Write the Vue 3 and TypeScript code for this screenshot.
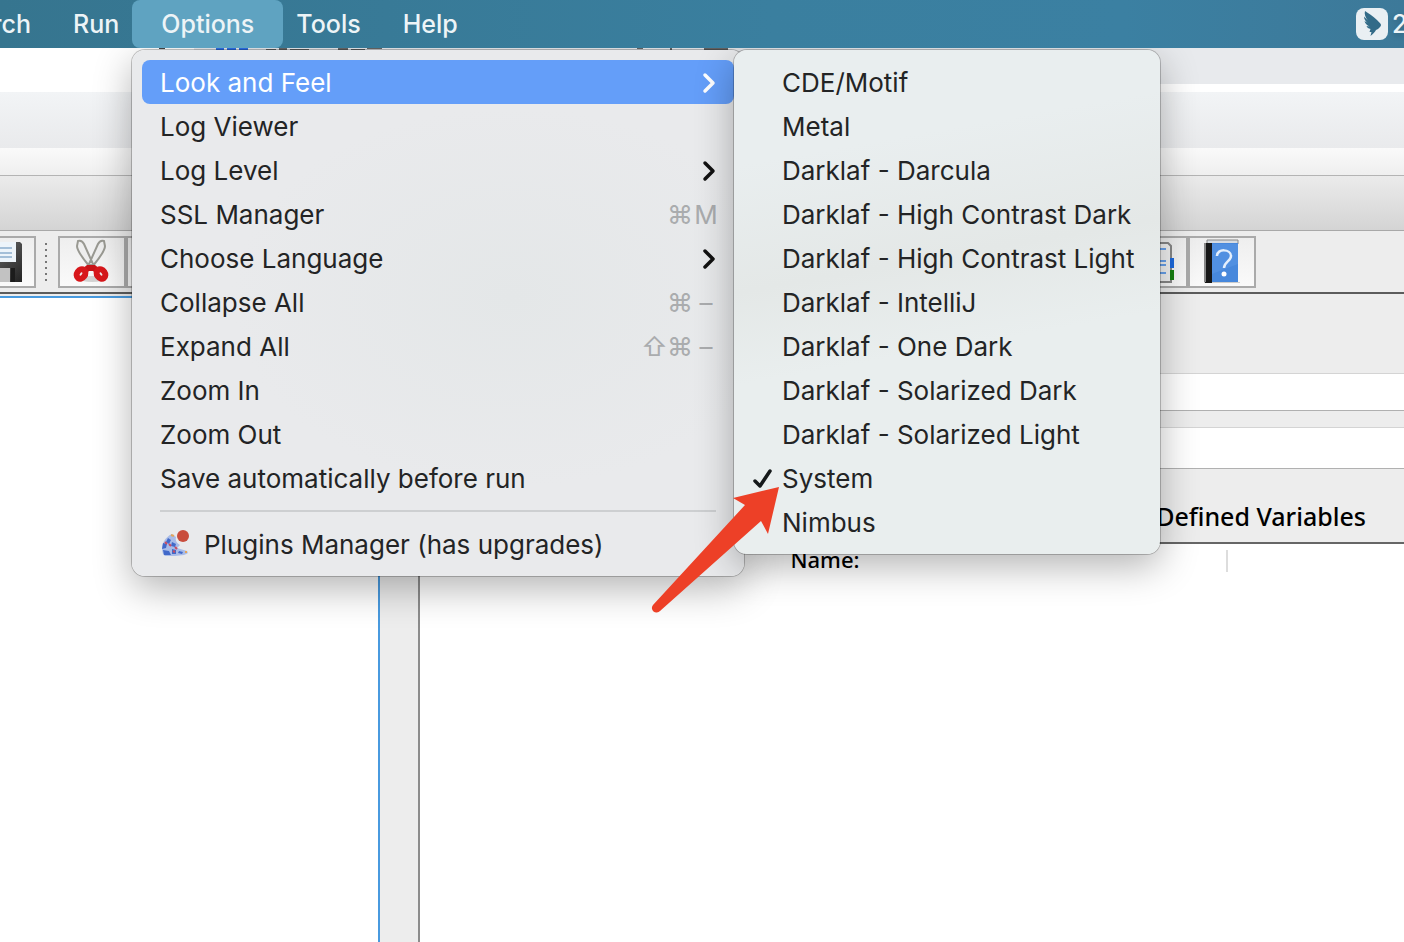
<script setup lang="ts">
interface OptionItem {
  label: string
  keys?: string[]
  submenu?: boolean
  active?: boolean
}

const options: OptionItem[] = [
  { label: 'Look and Feel', submenu: true, active: true },
  { label: 'Log Viewer' },
  { label: 'Log Level', submenu: true },
  { label: 'SSL Manager', keys: ['⌘', 'M'] },
  { label: 'Choose Language', submenu: true },
  { label: 'Collapse All', keys: ['⌘', '–'] },
  { label: 'Expand All', keys: ['⇧', '⌘', '–'] },
  { label: 'Zoom In' },
  { label: 'Zoom Out' },
  { label: 'Save automatically before run' },
]

const themes: string[] = [
  'CDE/Motif',
  'Metal',
  'Darklaf - Darcula',
  'Darklaf - High Contrast Dark',
  'Darklaf - High Contrast Light',
  'Darklaf - IntelliJ',
  'Darklaf - One Dark',
  'Darklaf - Solarized Dark',
  'Darklaf - Solarized Light',
  'System',
  'Nimbus',
]
const selected = 'System'
</script>

<template>
  <div class="desktop">
    <nav class="menubar" aria-label="Menu bar">
      <button class="bar-item first">Search</button>
      <button class="bar-item">Run</button>
      <button class="bar-item open" aria-expanded="true">Options</button>
      <button class="bar-item">Tools</button>
      <button class="bar-item">Help</button>
      <div class="status">
        <svg class="wing" viewBox="0 0 32 32" aria-hidden="true">
          <rect width="32" height="32" rx="8" fill="#e9eff3" />
          <path
            d="M9 3c3 2 8 5 12 9 3 3 4 4 4 5 0 1-1 2-3 4l-2 1c-1 2-3 4-5.500 6l1-4-2 0 1-3c-2-.500-3.500-1.500-4-3l3 .500c-2.500-1-4.500-3-5-5.500l4 2.500C10 14 8 11.500 8 8.500l4 4C9.500 9.500 8 6 9 3z"
            fill="#326b88"
          />
        </svg>
        <span>2</span>
      </div>
    </nav>

    <header class="chrome">
      <div class="tabstrip">
        <svg class="marks" viewBox="0 0 600 2" aria-hidden="true">
          <path d="M29 0h6v1h-6z" fill="#444" />
          <path d="M86 0h8v2h-8zM97 0h9v2h-9zM109 0h9v2h-9z" fill="#2c6fe8" />
          <path d="M136 1h10v1h-10zM149 0h8v2h-8zM160 1h19v1h-19zM208 0h10v2h-10zM221 1h14v1h-14zM237 0h15v1h-15zM507 0h6v1h-6zM540 0h2v2h-2zM574 0h24v2h-24z" fill="#666" />
        </svg>
      </div>
      <div class="address"></div>
      <div class="bookmarks"></div>
      <div class="titlebar"></div>
    </header>

    <div class="toolbar" role="toolbar" aria-label="Main">
      <button class="tool cut-off" aria-label="Save">
        <svg width="44" height="44" viewBox="0 0 44 44" aria-hidden="true">
          <defs>
            <linearGradient id="disk" x2="1" y2="1">
              <stop offset="0" stop-color="#777" />
              <stop offset="1" stop-color="#222" />
            </linearGradient>
          </defs>
          <path d="M2 2h40l2 2v38H2z" fill="url(#disk)" />
          <path d="M6 2h32v20H6z" fill="#edf4fa" />
          <path d="M10 8h24M10 13h24M10 17h24" stroke="#a4bfd8" stroke-width="2" />
          <path d="M8 28h24v14H8z" fill="#c2c2c2" />
          <path d="M33 28h4v14h-4z" fill="#1c1c1c" />
        </svg>
      </button>
      <span class="grip"></span>
      <button class="tool" aria-label="Cut">
        <svg width="36" height="44" viewBox="0 0 36 44" aria-hidden="true">
          <ellipse cx="18" cy="39" rx="13" ry="3" fill="#d2d2d2" />
          <path d="M4 1c3-1 5 1 6 3l9 20-3 3C12 22 3 12 3 6zM30 1c-3-1-5 1-6 3L15 24l3 3C22 22 31 12 31 6z" fill="#eee" stroke="#999992" stroke-width="2" />
          <path d="M13 25h8l5 4-5 4-2-2h-4l-2 2-5-4z" fill="#c81418" />
          <ellipse cx="7" cy="34" rx="4" ry="5" fill="#eee" stroke="#d8171b" stroke-width="6" transform="rotate(36 7 34)" />
          <ellipse cx="27" cy="34" rx="4" ry="5" fill="#eee" stroke="#d8171b" stroke-width="6" transform="rotate(-36 27 34)" />
        </svg>
      </button>
      <button class="tool" aria-label="Copy"></button>
      <span class="tool-space"></span>
      <button class="tool report" aria-label="Function helper">
        <svg width="44" height="44" viewBox="0 0 44 44" aria-hidden="true">
          <path d="M4 3h34l3 3v36H4z" fill="#f4f4f4" stroke="#888" stroke-width="2" />
          <path d="M10 9h26M10 21h26M10 25h26M10 33h26" stroke="#69a2ed" stroke-width="2" />
          <path d="M40 18h4v10h-4z" fill="#1d69dc" />
          <path d="M40 30h4v10h-4z" fill="#168011" />
        </svg>
      </button>
      <button class="tool" aria-label="Help">
        <svg width="36" height="44" viewBox="0 0 36 44" aria-hidden="true">
          <path d="M0 42h36v1H0z" fill="#ccc" />
          <path d="M3 0h31v4H3z" fill="#d7dce2" stroke="#888" stroke-width="1" />
          <path d="M1 3h7v40H1z" fill="#171717" />
          <path d="M0 3h2v39H0z" fill="#888" />
          <path d="M8 3h26v39H8z" fill="#4788dc" />
          <path d="M8 4h26v20L8 34z" fill="#5b97e6" opacity=".5" />
          <path d="M13 16c0-8 14-7 14 0 0 5-7 6-7 12" fill="none" stroke="#e4effc" stroke-width="2.500" />
          <circle cx="20" cy="34" r="2.500" fill="#fff" />
        </svg>
      </button>
    </div>

    <main class="workspace">
      <section class="tree" aria-label="Test plan tree"></section>
      <div class="splitter"></div>
      <section class="editor">
        <div class="heading"></div>
        <input class="field name" aria-label="Name" />
        <div class="between"></div>
        <input class="field" aria-label="Comments" />
        <h2 class="caption">User Defined Variables</h2>
        <table class="variables">
          <thead>
            <tr>
              <th class="col-name" scope="col">Name:</th>
              <td></td>
            </tr>
          </thead>
        </table>
      </section>
    </main>

    <div class="menu options" role="menu" aria-label="Options">
      <button
        v-for="item in options"
        :key="item.label"
        class="row"
        :class="{ active: item.active }"
        role="menuitem"
      >
        <span>{{ item.label }}</span>
        <svg v-if="item.submenu" class="chevron" width="14" height="22" viewBox="0 0 14 22" aria-hidden="true">
          <path d="M3 4l8 8-8 8" fill="none" stroke="currentColor" stroke-width="3.500" stroke-linecap="round" stroke-linejoin="round" />
        </svg>
        <span v-if="item.keys" class="keys">
          <kbd v-for="key in item.keys" :key="key">{{ key }}</kbd>
        </span>
      </button>
      <hr class="rule" />
      <button class="row plugins" role="menuitem">
        <svg width="30" height="30" viewBox="0 0 30 30" aria-hidden="true">
          <path d="M3 25C0 16 5 8 12 5l4 3c-1 4 1 6 4 8l-3 3 10 3c2 2 0 3-3 4l-9 1H5z" fill="#a9bce8" />
          <path d="M3 14l4 1-1 4-4 1zM8 9l3 2-2 4-3-2zM3 21l6 1 2 4H4zM12 20l4 1v4h-4zM12 13l4 2-1 3-4-1zM19 22l4 1-1 2-4-1z" fill="#4169ca" />
          <path d="M9 15l2 2M5 13l2 2M15 18l2 2M13 22l2 1" stroke="#c94c62" stroke-width="2" />
          <path d="M11 6l3 1M25 23h2" stroke="#e3a65c" stroke-width="2" />
          <circle cx="23" cy="7" r="6" fill="#c94d3d" />
        </svg>
        <span>Plugins Manager (has upgrades)</span>
      </button>
    </div>

    <div class="menu themes" role="menu" aria-label="Look and Feel">
      <button
        v-for="theme in themes"
        :key="theme"
        class="row"
        role="menuitemradio"
        :aria-checked="theme === selected"
      >
        <span class="tick">
          <svg v-if="theme === selected" width="20" height="22" viewBox="0 0 20 22" aria-hidden="true">
            <path d="M3 14l5 5L18 4" fill="none" stroke="#15191a" stroke-width="3.500" stroke-linecap="round" stroke-linejoin="round" />
          </svg>
        </span>
        <span>{{ theme }}</span>
      </button>
    </div>

    <svg class="arrow" width="140" height="140" viewBox="0 0 140 140" aria-hidden="true">
      <path d="M129 7L83 18l12 7L3 125a4.500 4.500 0 0 0 7 6L111 41l7 13z" fill="#ed4027" />
    </svg>
  </div>
</template>

<style>
body {
  margin: 0;
}
</style>

<style scoped>
.desktop {
  position: relative;
  display: flex;
  flex-direction: column;
  min-height: 100vh;
  overflow: hidden;
  background: #fff;
  font-family: Inter, 'Liberation Sans', sans-serif;
  font-size: 25px;
  color: #232425;
}
button {
  margin: 0;
  padding: 0;
  border: 0;
  background: none;
  font: inherit;
  color: inherit;
}
svg {
  display: block;
  flex: none;
  overflow: visible;
}

.menubar {
  position: relative;
  z-index: 4;
  display: flex;
  height: 48px;
  overflow: hidden;
  background: linear-gradient(90deg, #36758f, #3a7f9f 55%, #3b80a2 80%, #3d7999);
  color: #edf4f7;
  font-weight: 500;
  text-shadow: 0 2px 6px rgba(0, 0, 0, 0.2);
}
.bar-item {
  flex: none;
  padding: 0 21px;
  line-height: 48px;
}
.bar-item.first {
  display: flex;
  justify-content: flex-end;
  width: 52px;
}
.bar-item.open {
  margin: 0 -8px;
  padding: 0 29px;
  border-radius: 8px;
  background: #5fa3c1;
}
.status {
  display: flex;
  align-items: center;
  gap: 4px;
  width: 48px;
  margin-left: auto;
}
.wing {
  width: 32px;
  height: 32px;
}

.tabstrip {
  height: 36px;
  border-bottom: 8px solid #fff;
  background: linear-gradient(90deg, #fff 194px, #e8eaed 194px);
}
.marks {
  width: 600px;
  height: 2px;
  margin-left: 130px;
}
.address {
  height: 56px;
  background: linear-gradient(#f2f4f6, #e9eaec);
}
.bookmarks {
  height: 27px;
  border-bottom: 1px solid #b4b4b4;
  background: linear-gradient(#fafafa, #efefef);
}
.titlebar {
  height: 54px;
  border-bottom: 1px solid #a8a8a8;
  background: linear-gradient(#ebebeb, #d4d4d4);
}

.toolbar {
  display: flex;
  align-items: center;
  height: 61px;
  border-bottom: 2px solid #5c5c5c;
  background: #ededed;
}
.tool {
  display: flex;
  flex: none;
  align-items: center;
  justify-content: center;
  box-sizing: border-box;
  width: 68px;
  height: 52px;
  border: 2px solid #aaa;
  background: linear-gradient(#eee, #fafafa);
}
.cut-off {
  justify-content: flex-end;
  margin-left: -32px;
  padding-right: 12px;
}
.report {
  justify-content: flex-end;
  padding-right: 12px;
}
.grip {
  flex: none;
  width: 2px;
  height: 38px;
  margin: 0 11px 0 9px;
  background: repeating-linear-gradient(#777 0 2px, transparent 2px 6px);
}
.tool-space {
  flex: none;
  width: 926px;
}

.workspace {
  display: flex;
  flex: 1;
  background: #ededed;
}
.tree {
  flex: none;
  width: 378px;
  margin-top: 2px;
  border-top: 2px solid #489adf;
  border-right: 2px solid #489adf;
  background: #fff;
}
.splitter {
  flex: none;
  width: 38px;
  border-right: 2px solid #8c8c8c;
}
.editor {
  display: flex;
  flex: 1;
  flex-direction: column;
  min-width: 0;
  background: #fff;
  font-family: 'Noto Sans', 'Open Sans', sans-serif;
  color: #000;
}
.heading {
  height: 79px;
  background: #ededed;
}
.field {
  box-sizing: border-box;
  width: 100%;
  height: 42px;
  padding: 0 8px;
  border: 0;
  border-top: 1px solid #d4d4d4;
  border-bottom: 1px solid #b0b0b0;
  border-radius: 0;
  background: #fff;
  font: inherit;
}
.field.name {
  height: 38px;
}
.between {
  height: 16px;
  background: #ededed;
}
.caption {
  margin: 0;
  padding: 30px 38px 8px 0;
  border-bottom: 2px solid #666;
  background: #ededed;
  font-size: 25px;
  font-weight: 500;
  line-height: 35px;
  text-align: right;
}
.variables {
  width: 100%;
  margin-top: 6px;
  border-collapse: collapse;
  table-layout: fixed;
  font-size: 22px;
  line-height: 18px;
}
.variables th,
.variables td {
  height: 22px;
  padding: 0;
  font-weight: 500;
  vertical-align: top;
}
.variables .col-name {
  width: 802px;
  padding-left: 4px;
  border-right: 2px solid #ddd;
}

.menu {
  position: absolute;
  top: 50px;
  box-sizing: border-box;
  padding: 10px;
  border-radius: 13px;
  box-shadow: 0 0 0 1px rgba(0, 0, 0, 0.22), 0 12px 38px rgba(0, 0, 0, 0.3);
  font-size: 26px;
}
.options {
  left: 132px;
  z-index: 1;
  width: 612px;
  background: radial-gradient(ellipse 280px 190px at 62% 47%, #e4e7e8, #e9eaec);
}
.themes {
  left: 734px;
  z-index: 2;
  width: 426px;
  background: linear-gradient(170deg, #e9eeef 20%, #e4e8e7 42%, #e9eeee 58%);
}
.row {
  display: flex;
  align-items: center;
  width: 100%;
  height: 44px;
  padding: 0 18px;
  border-radius: 8px;
  text-align: left;
  white-space: nowrap;
}
.row.active {
  background: #649ef9;
  color: #fff;
}
.chevron {
  margin-left: auto;
}
.row:not(.active) .chevron {
  color: #111;
}
.keys {
  display: flex;
  margin-left: auto;
  margin-right: -3px;
  color: #aaacae;
}
kbd {
  width: 26px;
  font: inherit;
  text-align: center;
}
.rule {
  height: 2px;
  margin: 10px 18px;
  border: 0;
  background: #cdcfd1;
}
.plugins {
  gap: 14px;
}
.themes .row {
  padding: 0 0 0 8px;
}
.tick {
  flex: none;
  width: 30px;
}
.arrow {
  position: absolute;
  top: 480px;
  left: 650px;
  z-index: 3;
}
</style>
